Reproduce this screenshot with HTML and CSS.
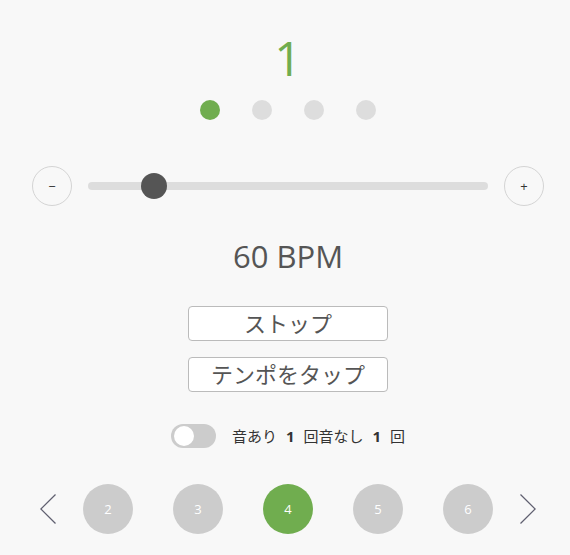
FILE: index.html
```html
<!DOCTYPE html>
<html lang="ja">
<head>
<meta charset="utf-8">
<title>メトロノーム</title>
<link rel="stylesheet" href="styles.css">
</head>
<body>
<main class="app">
  <div class="beat-number">1</div>
  <div class="beat-dots">
    <span class="dot active"></span>
    <span class="dot"></span>
    <span class="dot"></span>
    <span class="dot"></span>
  </div>
  <div class="tempo-row">
    <button class="round-btn">−</button>
    <div class="track"><span class="thumb"></span></div>
    <button class="round-btn">+</button>
  </div>
  <div class="bpm">60 BPM</div>
  <div class="actions">
    <button class="action-btn">ストップ</button>
    <button class="action-btn">テンポをタップ</button>
  </div>
  <div class="mute-row">
    <span class="toggle"><span class="knob"></span></span>
    <span class="mute-text">音あり<b class="count">1</b>回音なし<b class="count">1</b>回</span>
  </div>
  <div class="pager">
    <svg class="chev" width="16" height="30" viewBox="0 0 16 30"><path d="M15.5 0.5 L0.8 15 L15.5 29.5" fill="none" stroke="#606070" stroke-width="1.3"/></svg>
    <div class="pages">
      <span class="page">2</span>
      <span class="page">3</span>
      <span class="page current">4</span>
      <span class="page">5</span>
      <span class="page">6</span>
    </div>
    <svg class="chev" width="16" height="30" viewBox="0 0 16 30"><path d="M0.5 0.5 L15.2 15 L0.5 29.5" fill="none" stroke="#606070" stroke-width="1.3"/></svg>
  </div>
</main>
</body>
</html>
```

FILE: styles.css
```css
html, body {
  margin: 0;
  padding: 0;
  background: #f8f8f8;
}
body {
  font-family: "Open Sans", "Noto Sans CJK JP", sans-serif;
  color: #555;
}
.app {
  width: 512px;
  margin-left: 32px;
  padding-top: 30px;
  display: flex;
  flex-direction: column;
  align-items: center;
}
.beat-number {
  font-size: 48px;
  line-height: 56px;
  height: 56px;
  color: #70ad4f;
}
.beat-dots {
  margin-top: 14px;
  display: flex;
  gap: 32px;
}
.dot {
  width: 20px;
  height: 20px;
  border-radius: 50%;
  background: #dddddd;
}
.dot.active {
  background: #70ad4f;
}
.tempo-row {
  margin-top: 46px;
  width: 512px;
  display: flex;
  align-items: center;
}
.round-btn {
  width: 40px;
  height: 40px;
  border-radius: 50%;
  border: 1px solid #d4d4d4;
  background: #f8f8f8;
  padding: 0;
  font-family: "Open Sans", sans-serif;
  font-size: 13px;
  color: #333;
  flex: none;
}
.track {
  position: relative;
  flex: 1;
  height: 8px;
  margin: 0 16px;
  border-radius: 4px;
  background: #dddddd;
}
.thumb {
  position: absolute;
  left: 53px;
  top: -9px;
  width: 26px;
  height: 26px;
  border-radius: 50%;
  background: #555555;
}
.bpm {
  margin-top: 30px;
  font-size: 31px;
  line-height: 40px;
  color: #555;
}
.actions {
  margin-top: 30px;
  display: flex;
  flex-direction: column;
  gap: 16px;
}
.action-btn {
  width: 200px;
  height: 35px;
  padding: 0;
  border: 1px solid #bbbbbb;
  border-radius: 4px;
  background: #ffffff;
  font-family: "Open Sans", "Noto Sans CJK JP", sans-serif;
  font-size: 22px;
  line-height: 33px;
  color: #555;
}
.mute-row {
  margin-top: 32px;
  display: flex;
  align-items: center;
  gap: 16px;
}
.toggle {
  position: relative;
  width: 45px;
  height: 24px;
  border-radius: 12px;
  background: #cccccc;
}
.knob {
  position: absolute;
  left: 3px;
  top: 2px;
  width: 20px;
  height: 20px;
  border-radius: 50%;
  background: #ffffff;
}
.mute-text {
  font-size: 15px;
  color: #333;
  line-height: 24px;
}
.count {
  margin: 0 9px;
  font-weight: 700;
}
.pager {
  margin-top: 36px;
  width: 496px;
  display: flex;
  align-items: center;
  justify-content: space-between;
}
.chev {
  display: block;
}
.pages {
  display: flex;
  gap: 40px;
}
.page {
  width: 50px;
  height: 50px;
  border-radius: 50%;
  background: #cccccc;
  color: #ffffff;
  font-size: 13px;
  display: flex;
  align-items: center;
  justify-content: center;
}
.page.current {
  background: #70ad4f;
}
```
